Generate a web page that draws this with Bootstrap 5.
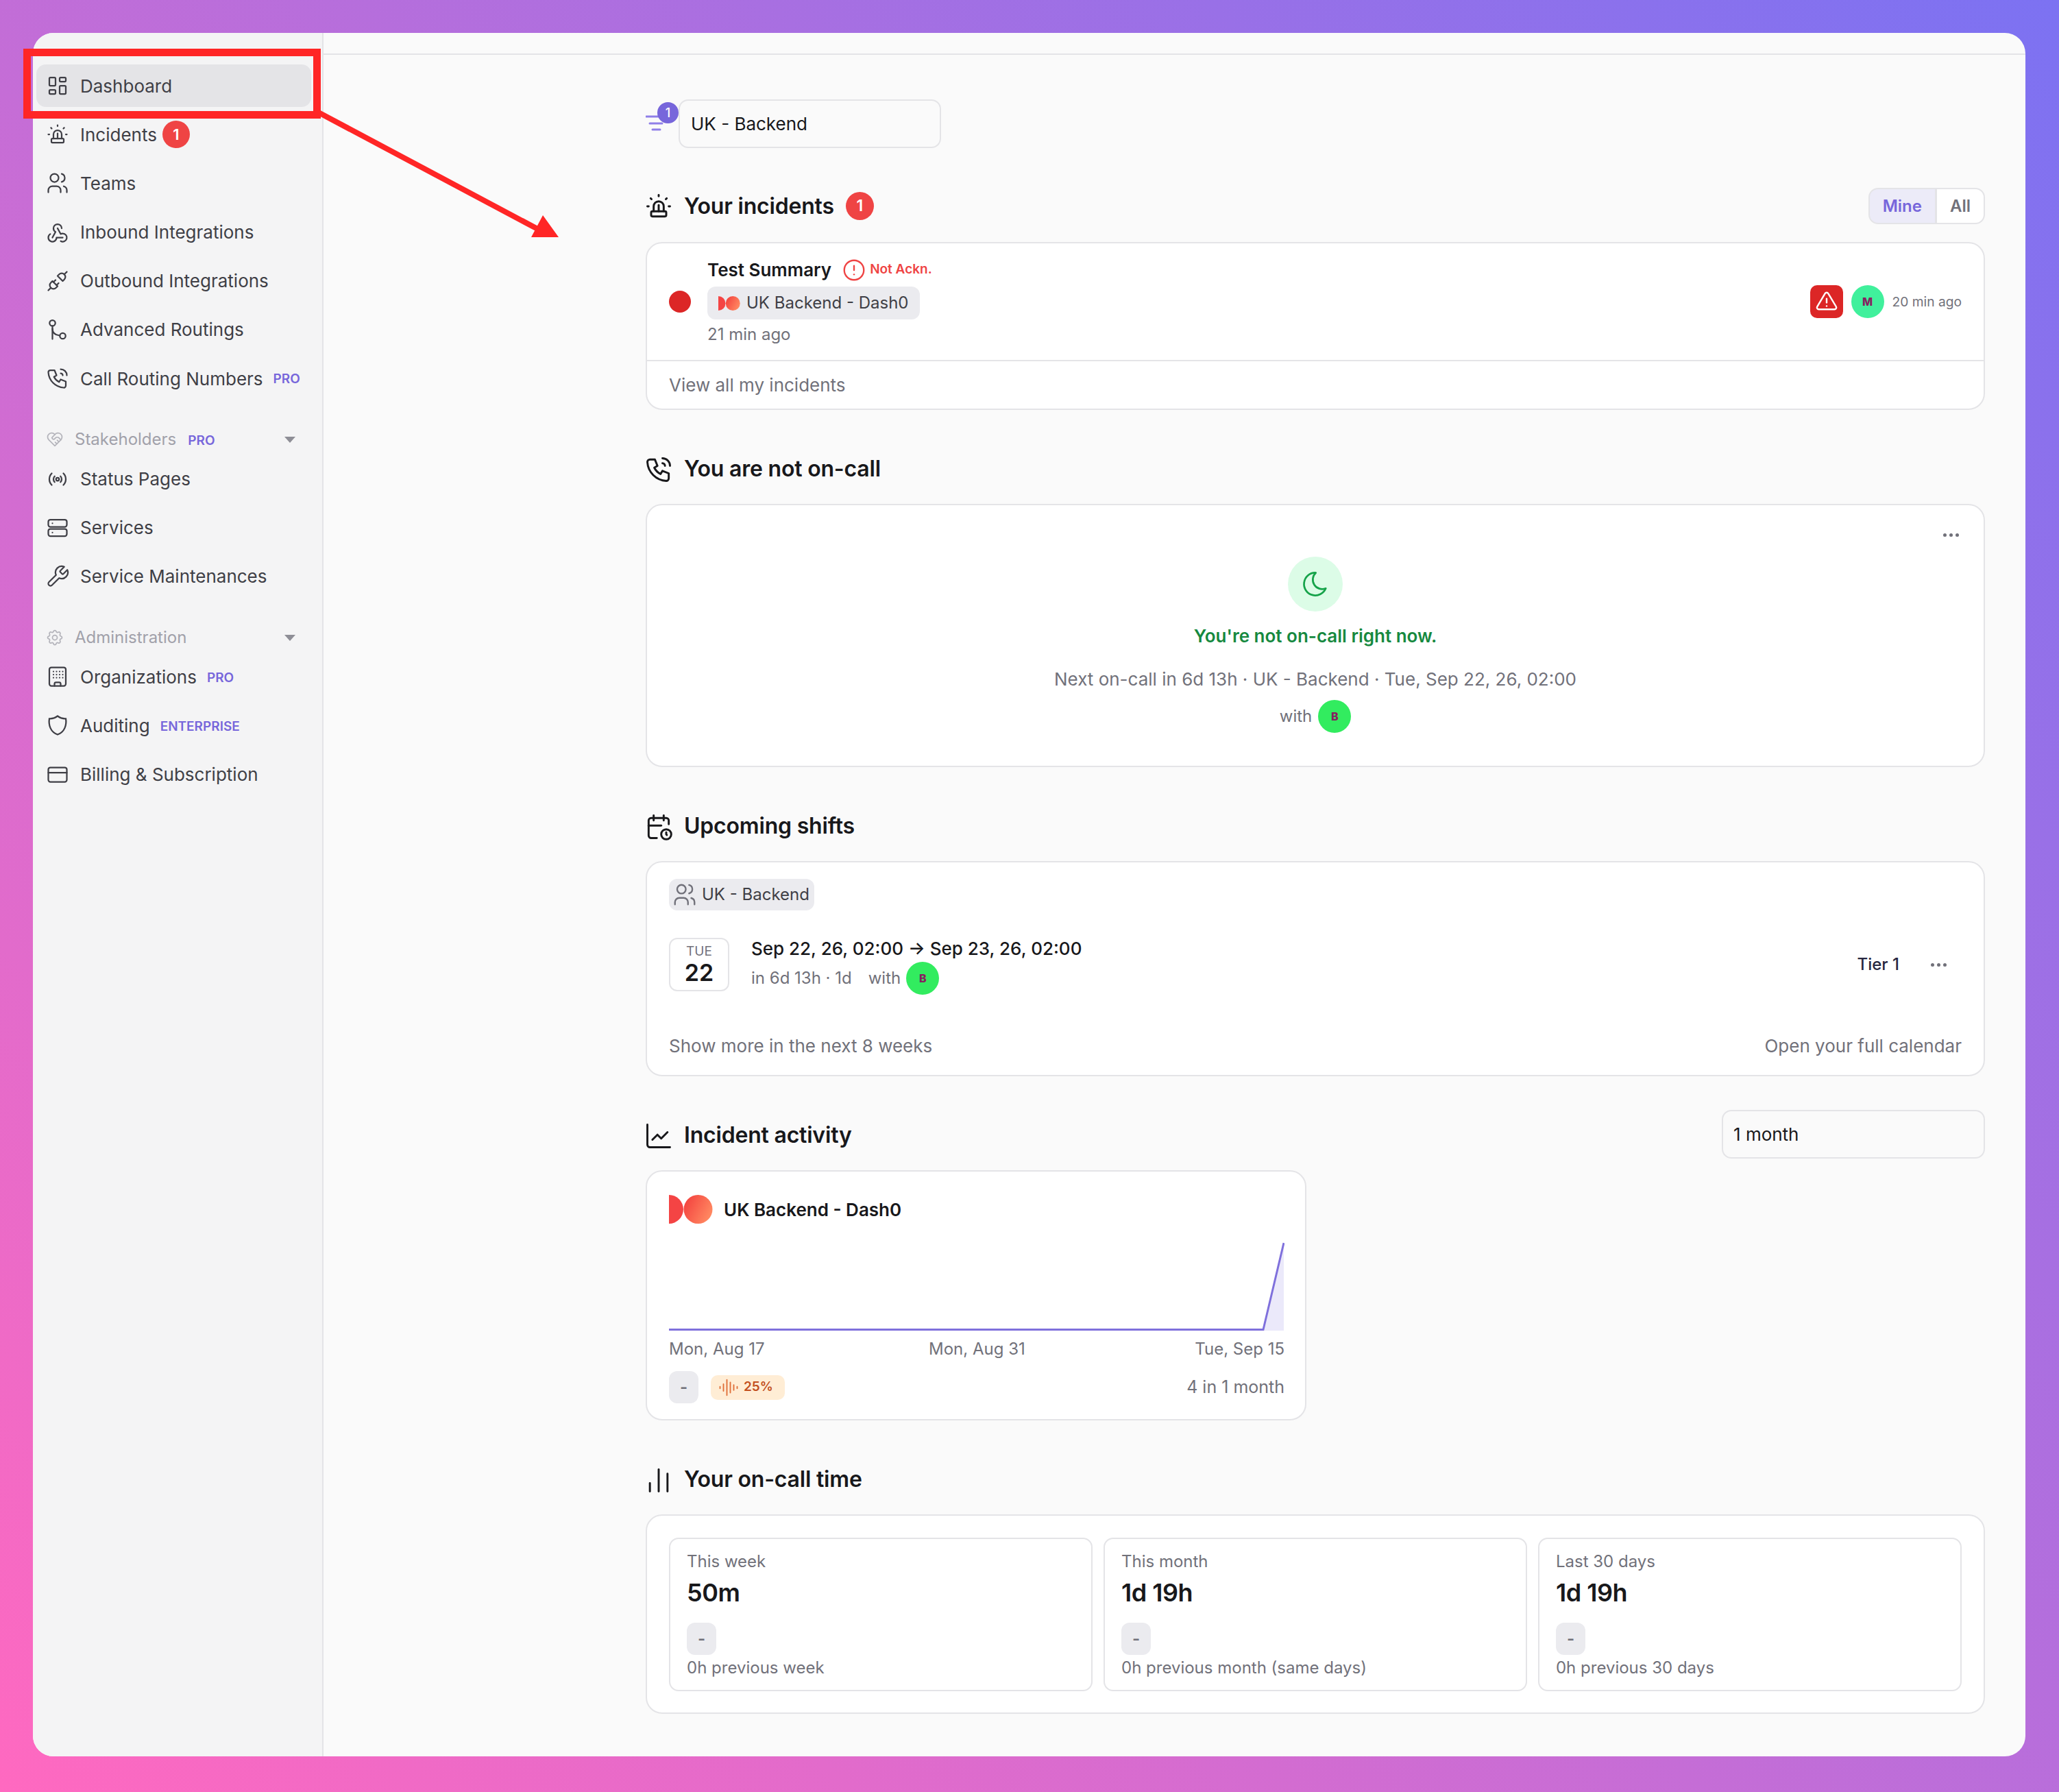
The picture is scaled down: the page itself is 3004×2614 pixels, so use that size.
<!DOCTYPE html>
<html lang="en">
<head>
    <meta charset="UTF-8">
    <title>Dashboard</title>
    <link href="https://cdn.jsdelivr.net/npm/bootstrap@5.3.0/dist/css/bootstrap.min.css" rel="stylesheet">
    <style>
        html, body { height: 100%; }
        body {
            font-family: Inter, "Liberation Sans", sans-serif;
            font-size: 26px;
            color: #18181b;
            background: linear-gradient(45deg, #ff69c0, #7c72f2);
            padding: 48px 49px 52px 48px;
            position: relative;
        }
        svg.ico { fill: none; stroke: currentColor; stroke-width: 1.5; stroke-linecap: round; stroke-linejoin: round; flex: none; }
        .app-window { height: 100%; border-radius: 30px; overflow: hidden; background: #fafafa; }

        /* sidebar */
        .sidebar { width: 424px; flex: none; background: #f4f4f5; border-right: 2px solid #e4e4e7; padding: 46px 16px 0 5px; gap: 9.2px; }
        .sidebar .nav-link { height: 62px; padding: 0 0 0 13px; border-radius: 14px; color: #3f3f46; gap: 15px; font-size: 26px; white-space: nowrap; }
        .sidebar .nav-link.active { background: #e4e4e7; }
        .sidebar .nav-link svg.ico { width: 36px; height: 36px; }
        .sidebar .count { width: 40px; height: 40px; background: #ef4444; color: #fff; border-radius: 50%; font-size: 22px; font-weight: 600; margin-left: -7px; }
        .plan { color: #7766db; font-size: 19px; font-weight: 600; margin-left: 0; padding-top: 3px; }
        .group-label { height: 50px; margin: 24px 0 -8px; padding: 0 23px 0 13px; color: #a1a1aa; font-size: 24px; gap: 15px; }
        .group-label svg.ico { width: 28px; height: 28px; color: #b4b4bb; }
        .group-label .plan { margin-left: 2px; }
        .caret-down { width: 0; height: 0; margin-left: auto; border-left: 8px solid transparent; border-right: 8px solid transparent; border-top: 9px solid #8e8e96; }

        /* main column */
        .main-col { min-width: 0; }
        .top-line { height: 32px; flex: none; border-bottom: 2px solid #e4e4e7; }
        .content { padding: 65px 59px 0 470px; }
        .filter-row { height: 71px; }
        .filter-icon { width: 48px; height: 71px; position: relative; color: #8f7fe8; flex: none; }
        .filter-icon svg { position: absolute; left: 0; top: 16px; stroke-width: 3; }
        .filter-icon b { position: absolute; right: 0; top: 4px; width: 31px; height: 31px; border-radius: 50%; background: #7766db; color: #fff; font-size: 18px; font-weight: 500; }
        .plain-select { background: #fafafa; border: 2px solid #e4e4e7; border-radius: 14px; font-size: 26px; color: #18181b; display: flex; align-items: center; height: 71px; }
        .select-team { width: 383px; padding: 0 16px; }
        .select-range { width: 384px; padding: 0 15px; margin-bottom: 4px; }

        .section-head { height: 53px; margin: 60px 0 24px; gap: 17px; }
        .section-head.first { margin-top: 58px; margin-bottom: 26px; }
        .section-head.first h2 { margin-top: 2px; }
        .section-head h2 { font-size: 32px; font-weight: 600; margin: 0; letter-spacing: -0.2px; }
        .section-head svg.ico { width: 44px; height: 44px; stroke-width: 1.6; margin: 0 -2px 0 -3px; }
        .section-head .count { width: 41px; height: 41px; background: #ef4444; color: #fff; border-radius: 50%; font-size: 23px; font-weight: 600; }

        .btn-group .btn { font-size: 24px; font-weight: 600; padding: 0 19px; height: 53px; border: 2px solid #e4e4e7; background: #fff; color: #71717a; display: flex; align-items: center; }
        .btn-group .btn.active { background: #ecebf8; color: #7766db; border-color: #e4e4e7; }
        .btn-group .btn:first-child { border-radius: 14px 0 0 14px; }
        .btn-group .btn:last-child { border-radius: 0 14px 14px 0; }

        .card { --bs-card-border-color: #e4e4e7; --bs-card-border-width: 2px; --bs-card-border-radius: 24px; --bs-card-inner-border-radius: 22px; --bs-card-bg: #fff; }
        .muted { color: #71717a; font-size: 24px; }
        .pill { background: #ebebef; border-radius: 12px; color: #3f3f46; }

        /* incident card */
        .incident-row { height: 172px; padding: 0 32px; border-bottom: 2px solid #e4e4e7; }
        .sev-dot { width: 32px; height: 32px; background: #dc2626; border-radius: 50%; flex: none; }
        .incident-title { font-weight: 600; font-size: 26px; }
        .not-ack { color: #ef4444; font-size: 19px; font-weight: 600; gap: 4px; margin-left: -2px; }
        .not-ack svg.ico { width: 38px; height: 38px; }
        .source-pill { height: 48px; padding: 0 17px 0 16px; gap: 9px; margin: 5px 0 4px; font-size: 24px; }
        .sev-box { width: 48px; height: 48px; background: #dc2626; color: #fff; border-radius: 10px; }
        .sev-box svg.ico { width: 34px; height: 34px; stroke-width: 1.7; }
        .avatar { width: 48px; height: 48px; border-radius: 50%; color: #86205f; font-size: 16px; font-weight: 800; flex: none; }
        .avatar-m { background: #40f09c; }
        .avatar-b { background: #32ec5f; }
        .ago { font-size: 19.2px; color: #71717a; }
        .card-link-row { height: 69px; padding: 0 32px; color: #71717a; font-size: 26px; }

        /* on-call card */
        .oncall-card { height: 384px; }
        .more-dots { color: #71717a; gap: 4px; }
        .more-dots i { width: 5px; height: 5px; border-radius: 50%; background: currentColor; display: block; }
        .oncall-card .more-dots { position: absolute; top: 41px; right: 36px; }
        .moon-circle { width: 80px; height: 80px; border-radius: 50%; background: #dcfce7; color: #16a34a; margin-top: 75px; }
        .moon-circle svg.ico { width: 44px; height: 44px; }
        .off-text { color: #16893f; font-weight: 600; margin-top: 16px; }
        .next-text { color: #71717a; margin-top: 24px; }
        .with-row { margin-top: 11px; gap: 9px; color: #71717a; font-size: 24px; }

        /* shifts */
        .shift-card { height: 314px; padding: 24px 32px 0; }
        .team-pill { height: 46px; padding: 0 7px 0 4px; gap: 6px; font-size: 24px; }
        .team-pill svg.ico { width: 38px; height: 38px; color: #71717a; }
        .date-box { width: 88px; height: 78px; border: 2px solid #e4e4e7; border-radius: 12px; line-height: 1; flex: none; }
        .date-box small { font-size: 19px; color: #71717a; margin-bottom: 5px; }
        .date-box strong { font-size: 34px; font-weight: 600; }
        .shift-row { margin-top: 40px; gap: 32px; }
        .shift-time { font-weight: 500; line-height: 31px; }
        .shift-meta { margin-top: 4px; }
        .shift-side { margin-bottom: 5px; padding-right: 22px; }
        .tier { font-weight: 500; font-size: 24px; color: #27273f; margin-right: 46px; }
        .shift-foot { margin-top: 55px; color: #71717a; }

        /* activity */
        .activity-card { width: 964px; height: 365px; padding: 34px 30px 0 32px; }
        .activity-title { font-weight: 600; gap: 16px; }
        .chart { margin-top: 27px; }
        .axis-row { margin-top: 9px; }
        .activity-foot { margin-top: 14px; }
        .month-count { font-size: 25px; }
        .dash-pill { width: 43px; height: 47px; color: #71717a; font-size: 24px; font-weight: 600; }
        .noise-badge { height: 36px; margin-left: 2px; padding: 0 17px 0 11px; background: #ffedd5; color: #c2501e; border-radius: 10px; font-size: 19px; font-weight: 600; gap: 7px; }
        .noise-badge svg.ico { width: 30px; height: 30px; color: #e0703a; }

        /* on-call time */
        .time-card { padding: 32px; height: 291px; }
        .stat-card { height: 224px; padding: 17px 24px 0; --bs-card-border-radius: 14px; --bs-card-inner-border-radius: 12px; }
        .stat-card .label { color: #71717a; font-size: 24px; line-height: 32px; }
        .stat-card .value { font-size: 36px; font-weight: 600; line-height: 48px; margin: 5px 0 20px; letter-spacing: -0.5px; }
        .stat-card .prev { color: #71717a; font-size: 24px; line-height: 32px; margin-top: 3px; }

        /* screenshot annotation, lies over the page */
        .note-box { position: absolute; left: 34px; top: 71px; width: 434px; height: 102px; border: 11px solid #ff2626; pointer-events: none; }
        .note-arrow { position: absolute; left: 0; top: 0; pointer-events: none; }
    </style>
</head>
<body>
    <svg width="0" height="0" class="position-absolute">
        <defs>
            <symbol id="i-dashboard" viewBox="0 0 24 24"><path d="M5 4h4a1 1 0 0 1 1 1v6a1 1 0 0 1 -1 1h-4a1 1 0 0 1 -1 -1v-6a1 1 0 0 1 1 -1"/><path d="M5 16h4a1 1 0 0 1 1 1v2a1 1 0 0 1 -1 1h-4a1 1 0 0 1 -1 -1v-2a1 1 0 0 1 1 -1"/><path d="M15 12h4a1 1 0 0 1 1 1v6a1 1 0 0 1 -1 1h-4a1 1 0 0 1 -1 -1v-6a1 1 0 0 1 1 -1"/><path d="M15 4h4a1 1 0 0 1 1 1v2a1 1 0 0 1 -1 1h-4a1 1 0 0 1 -1 -1v-2a1 1 0 0 1 1 -1"/></symbol>
            <symbol id="i-siren" viewBox="0 0 24 24"><path d="M8 16v-4a4 4 0 0 1 8 0v4"/><path d="M12 11v5"/><path d="M3 12h1m8 -9v1m8 8h1m-15.4 -6.4l.7 .7m12.1 -.7l-.7 .7"/><path d="M6 17a1 1 0 0 1 1 -1h10a1 1 0 0 1 1 1v2a1 1 0 0 1 -1 1h-10a1 1 0 0 1 -1 -1z"/></symbol>
            <symbol id="i-users" viewBox="0 0 24 24"><path d="M5 7a4 4 0 1 0 8 0a4 4 0 1 0 -8 0"/><path d="M3 21v-2a4 4 0 0 1 4 -4h4a4 4 0 0 1 4 4v2"/><path d="M16 3.13a4 4 0 0 1 0 7.75"/><path d="M21 21v-2a4 4 0 0 0 -3 -3.85"/></symbol>
            <symbol id="i-webhook" viewBox="0 0 24 24"><path d="M4.876 13.61a4 4 0 1 0 6.124 3.39h6"/><path d="M15.066 20.502a4 4 0 1 0 1.934 -7.502c-.706 0 -1.424 .179 -2 .5l-3 -5.5"/><path d="M16 8a4 4 0 1 0 -8 0c0 1.506 .77 2.818 2 3.5l-3 5.5"/></symbol>
            <symbol id="i-plug" viewBox="0 0 24 24"><path d="M7 12l5 5l-1.5 1.5a3.536 3.536 0 1 1 -5 -5l1.5 -1.5z"/><path d="M17 12l-5 -5l1.5 -1.5a3.536 3.536 0 1 1 5 5l-1.5 1.5z"/><path d="M3 21l2.5 -2.5"/><path d="M18.5 5.5l2.5 -2.5"/><path d="M10 11l-2 2"/><path d="M13 14l-2 2"/></symbol>
            <symbol id="i-route" viewBox="0 0 24 24"><circle cx="7" cy="5.5" r="2.8"/><path d="M7 8.3v12.7"/><path d="M7 11c0 4 2.5 6 6.5 6.5"/><circle cx="17" cy="18" r="2.8"/></symbol>
            <symbol id="i-phone" viewBox="0 0 24 24"><path d="M5 4h4l2 5l-2.5 1.5a11 11 0 0 0 5 5l1.5 -2.5l5 2v4a2 2 0 0 1 -2 2a16 16 0 0 1 -15 -15a2 2 0 0 1 2 -2"/><path d="M15 7a2 2 0 0 1 2 2"/><path d="M15 3a6 6 0 0 1 6 6"/></symbol>
            <symbol id="i-handshake" viewBox="0 0 24 24"><path d="M19.5 12.572l-7.5 7.428l-7.5 -7.428a5 5 0 1 1 7.5 -6.566a5 5 0 1 1 7.5 6.572"/><path d="M12 6l-3.293 3.293a1 1 0 0 0 0 1.414l.543 .543c.69 .69 1.81 .69 2.5 0l1 -1a3.182 3.182 0 0 1 4.5 0l2.25 2.25"/><path d="M12.5 15.5l2 2"/><path d="M15 13l2 2"/></symbol>
            <symbol id="i-broadcast" viewBox="0 0 24 24"><circle cx="12" cy="12" r="1.5"/><path d="M14.828 9.172a4 4 0 0 1 0 5.656"/><path d="M17.657 6.343a8 8 0 0 1 0 11.314"/><path d="M9.168 14.828a4 4 0 0 1 0 -5.656"/><path d="M6.337 17.657a8 8 0 0 1 0 -11.314"/></symbol>
            <symbol id="i-server" viewBox="0 0 24 24"><path d="M3 6a2 2 0 0 1 2 -2h14a2 2 0 0 1 2 2v3a2 2 0 0 1 -2 2h-14a2 2 0 0 1 -2 -2z"/><path d="M3 15a2 2 0 0 1 2 -2h14a2 2 0 0 1 2 2v3a2 2 0 0 1 -2 2h-14a2 2 0 0 1 -2 -2z"/><path d="M7 7.5v.01"/><path d="M7 16.5v.01"/></symbol>
            <symbol id="i-wrench" viewBox="0 0 24 24"><path d="M14.7 6.3a1 1 0 0 0 0 1.4l1.6 1.6a1 1 0 0 0 1.4 0l3.77-3.77a6 6 0 0 1-7.94 7.94l-6.91 6.91a2.12 2.12 0 0 1-3-3l6.91-6.91a6 6 0 0 1 7.94-7.94l-3.76 3.76z"/></symbol>
            <symbol id="i-gear" viewBox="0 0 24 24"><path d="M10.325 4.317c.426 -1.756 2.924 -1.756 3.35 0a1.724 1.724 0 0 0 2.573 1.066c1.543 -.94 3.31 .826 2.37 2.37a1.724 1.724 0 0 0 1.065 2.572c1.756 .426 1.756 2.924 0 3.35a1.724 1.724 0 0 0 -1.066 2.573c.94 1.543 -.826 3.31 -2.37 2.37a1.724 1.724 0 0 0 -2.572 1.065c-.426 1.756 -2.924 1.756 -3.35 0a1.724 1.724 0 0 0 -2.573 -1.066c-1.543 .94 -3.31 -.826 -2.37 -2.37a1.724 1.724 0 0 0 -1.065 -2.572c-1.756 -.426 -1.756 -2.924 0 -3.35a1.724 1.724 0 0 0 1.066 -2.573c-.94 -1.543 .826 -3.31 2.37 -2.37c1 .608 2.296 .07 2.572 -1.065z"/><path d="M9 12a3 3 0 1 0 6 0a3 3 0 0 0 -6 0"/></symbol>
            <symbol id="i-building" viewBox="0 0 24 24"><rect x="4" y="3" width="16" height="18" rx="2"/><path d="M9 21v-2a1.5 1.5 0 0 1 1.5 -1.5h3a1.5 1.5 0 0 1 1.5 1.5v2"/><path d="M8 7v.01M11 7v.01M14 7v.01M17 7v.01M8 10v.01M11 10v.01M14 10v.01M17 10v.01M8 13v.01M11 13v.01M14 13v.01M17 13v.01"/></symbol>
            <symbol id="i-shield" viewBox="0 0 24 24"><path d="M12 3a12 12 0 0 0 8 2.5c1 6 -1 13 -8 15.5c-7 -2.5 -9 -9.5 -8 -15.5a12 12 0 0 0 8 -2.5"/></symbol>
            <symbol id="i-card" viewBox="0 0 24 24"><rect x="3" y="5" width="18" height="14" rx="2"/><path d="M3 10h18"/></symbol>
            <symbol id="i-calendar-clock" viewBox="0 0 24 24"><path d="M10.5 21h-4.5a2 2 0 0 1 -2 -2v-12a2 2 0 0 1 2 -2h12a2 2 0 0 1 2 2v3"/><path d="M16 3v4"/><path d="M8 3v4"/><path d="M4 11h10"/><path d="M14 18a4 4 0 1 0 8 0a4 4 0 1 0 -8 0"/><path d="M18 16.5v1.5l.5 .5"/></symbol>
            <symbol id="i-chart" viewBox="0 0 24 24"><path d="M3 3v16a2 2 0 0 0 2 2h16"/><path d="M7 15l4 -4l3 3l5 -5"/></symbol>
            <symbol id="i-bars" viewBox="0 0 24 24"><path d="M5 21v-6.5"/><path d="M12 21v-17.5"/><path d="M19 21v-14"/></symbol>
            <symbol id="i-moon" viewBox="0 0 24 24"><path d="M12 3c.132 0 .263 0 .393 0a7.5 7.5 0 0 0 7.92 12.446a9 9 0 1 1 -8.313 -12.454z"/></symbol>
            <symbol id="i-alert" viewBox="0 0 24 24"><circle cx="12" cy="12" r="9"/><path d="M12 8v4"/><path d="M12 16h.01"/></symbol>
            <symbol id="i-warning" viewBox="0 0 24 24"><path d="M12 9v4"/><path d="M10.363 3.591l-8.106 13.534a1.914 1.914 0 0 0 1.636 2.871h16.214a1.914 1.914 0 0 0 1.636 -2.87l-8.106 -13.536a1.914 1.914 0 0 0 -3.274 0z"/><path d="M12 16.5h.01"/></symbol>
            <symbol id="i-wave" viewBox="0 0 24 24"><path d="M2 11v2M6 8v8M10 3v18M14 6v12M18 9v6M22 11v2"/></symbol>
            <linearGradient id="dash-grad" x1="0" x2="1" y1="0" y2="0.5"><stop offset="0" stop-color="#f23b3b"/><stop offset="1" stop-color="#ff8660"/></linearGradient>
            <symbol id="i-dash0" viewBox="0 0 64 42"><path d="M0 0a21 21 0 0 1 0 42z" fill="#f44444"/><circle cx="42.5" cy="21" r="21" fill="url(#dash-grad)"/></symbol>
        </defs>
    </svg>

    <div class="app-window d-flex">
        <aside class="sidebar d-flex flex-column">
            <a class="nav-link active d-flex align-items-center" href="#"><svg class="ico"><use href="#i-dashboard"/></svg>Dashboard</a>
            <a class="nav-link d-flex align-items-center" href="#"><svg class="ico"><use href="#i-siren"/></svg>Incidents<span class="count d-flex align-items-center justify-content-center">1</span></a>
            <a class="nav-link d-flex align-items-center" href="#"><svg class="ico"><use href="#i-users"/></svg>Teams</a>
            <a class="nav-link d-flex align-items-center" href="#"><svg class="ico"><use href="#i-webhook"/></svg>Inbound Integrations</a>
            <a class="nav-link d-flex align-items-center" href="#"><svg class="ico"><use href="#i-plug"/></svg>Outbound Integrations</a>
            <a class="nav-link d-flex align-items-center" href="#"><svg class="ico"><use href="#i-route"/></svg>Advanced Routings</a>
            <a class="nav-link d-flex align-items-center" href="#"><svg class="ico"><use href="#i-phone"/></svg>Call Routing Numbers<span class="plan">PRO</span></a>

            <div class="group-label d-flex align-items-center"><svg class="ico"><use href="#i-handshake"/></svg>Stakeholders<span class="plan">PRO</span><span class="caret-down"></span></div>
            <a class="nav-link d-flex align-items-center" href="#"><svg class="ico"><use href="#i-broadcast"/></svg>Status Pages</a>
            <a class="nav-link d-flex align-items-center" href="#"><svg class="ico"><use href="#i-server"/></svg>Services</a>
            <a class="nav-link d-flex align-items-center" href="#"><svg class="ico"><use href="#i-wrench"/></svg>Service Maintenances</a>

            <div class="group-label d-flex align-items-center"><svg class="ico"><use href="#i-gear"/></svg>Administration<span class="caret-down"></span></div>
            <a class="nav-link d-flex align-items-center" href="#"><svg class="ico"><use href="#i-building"/></svg>Organizations<span class="plan">PRO</span></a>
            <a class="nav-link d-flex align-items-center" href="#"><svg class="ico"><use href="#i-shield"/></svg>Auditing<span class="plan">ENTERPRISE</span></a>
            <a class="nav-link d-flex align-items-center" href="#"><svg class="ico"><use href="#i-card"/></svg>Billing &amp; Subscription</a>
        </aside>

        <div class="main-col flex-grow-1 d-flex flex-column">
            <div class="top-line"></div>
            <main class="content">
                <div class="filter-row d-flex align-items-center">
                    <div class="filter-icon">
                        <svg class="ico" width="26" height="32" viewBox="0 0 26 32"><path d="M1 9h24M6 19h18M10 28h11"/></svg>
                        <b class="d-flex align-items-center justify-content-center">1</b>
                    </div>
                    <div class="plain-select select-team">UK - Backend</div>
                </div>

                <section>
                    <div class="section-head first d-flex align-items-center">
                        <svg class="ico"><use href="#i-siren"/></svg>
                        <h2>Your incidents</h2>
                        <span class="count d-flex align-items-center justify-content-center">1</span>
                        <div class="btn-group ms-auto">
                            <button class="btn active" type="button">Mine</button>
                            <button class="btn" type="button">All</button>
                        </div>
                    </div>
                    <div class="card">
                        <div class="incident-row d-flex align-items-center">
                            <span class="sev-dot me-4"></span>
                            <div class="d-flex flex-column align-items-start">
                                <div class="d-flex align-items-center gap-3">
                                    <span class="incident-title">Test Summary</span>
                                    <span class="not-ack d-flex align-items-center"><svg class="ico"><use href="#i-alert"/></svg>Not Ackn.</span>
                                </div>
                                <div class="pill source-pill d-flex align-items-center">
                                    <svg width="32" height="21"><use href="#i-dash0"/></svg>UK Backend - Dash0
                                </div>
                                <span class="muted">21 min ago</span>
                            </div>
                            <div class="ms-auto d-flex align-items-center gap-2">
                                <span class="sev-box d-flex align-items-center justify-content-center"><svg class="ico"><use href="#i-warning"/></svg></span>
                                <span class="avatar avatar-m d-flex align-items-center justify-content-center mx-1">M</span>
                                <span class="ago">20 min ago</span>
                            </div>
                        </div>
                        <div class="card-link-row d-flex align-items-center">View all my incidents</div>
                    </div>
                </section>

                <section>
                    <div class="section-head d-flex align-items-center">
                        <svg class="ico"><use href="#i-phone"/></svg>
                        <h2>You are not on-call</h2>
                    </div>
                    <div class="card oncall-card align-items-center text-center">
                        <div class="more-dots d-flex"><i></i><i></i><i></i></div>
                        <div class="moon-circle d-flex align-items-center justify-content-center"><svg class="ico"><use href="#i-moon"/></svg></div>
                        <div class="off-text">You're not on-call right now.</div>
                        <div class="next-text">Next on-call in 6d 13h · UK - Backend · Tue, Sep 22, 26, 02:00</div>
                        <div class="with-row d-flex align-items-center">with <span class="avatar avatar-b d-flex align-items-center justify-content-center">B</span></div>
                    </div>
                </section>

                <section>
                    <div class="section-head d-flex align-items-center">
                        <svg class="ico"><use href="#i-calendar-clock"/></svg>
                        <h2>Upcoming shifts</h2>
                    </div>
                    <div class="card shift-card">
                        <div class="d-flex">
                            <div class="pill team-pill d-flex align-items-center"><svg class="ico"><use href="#i-users"/></svg>UK - Backend</div>
                        </div>
                        <div class="shift-row d-flex align-items-start">
                            <div class="date-box d-flex flex-column align-items-center justify-content-center">
                                <small>TUE</small>
                                <strong>22</strong>
                            </div>
                            <div>
                                <div class="shift-time">Sep 22, 26, 02:00 → Sep 23, 26, 02:00</div>
                                <div class="muted shift-meta d-flex align-items-center">in 6d 13h · 1d<span class="ms-4 me-2">with</span><span class="avatar avatar-b d-flex align-items-center justify-content-center">B</span></div>
                            </div>
                            <div class="shift-side ms-auto align-self-center d-flex align-items-center">
                                <span class="tier">Tier 1</span>
                                <div class="more-dots d-flex"><i></i><i></i><i></i></div>
                            </div>
                        </div>
                        <div class="shift-foot d-flex justify-content-between">
                            <span>Show more in the next 8 weeks</span>
                            <span>Open your full calendar</span>
                        </div>
                    </div>
                </section>

                <section>
                    <div class="section-head d-flex align-items-center">
                        <svg class="ico"><use href="#i-chart"/></svg>
                        <h2>Incident activity</h2>
                        <div class="plain-select select-range ms-auto">1 month</div>
                    </div>
                    <div class="card activity-card">
                        <div class="activity-title d-flex align-items-center"><svg width="64" height="42"><use href="#i-dash0"/></svg>UK Backend - Dash0</div>
                        <svg class="chart d-block" width="898" height="129" viewBox="0 0 898 129">
                            <polygon points="867,127 897,0 897,129 867,129" fill="#ebe9fa"/>
                            <polyline points="0,127.5 867,127.5 897,1" fill="none" stroke="#7f70dc" stroke-width="3"/>
                        </svg>
                        <div class="axis-row muted d-flex justify-content-between"><span>Mon, Aug 17</span><span class="me-2">Mon, Aug 31</span><span>Tue, Sep 15</span></div>
                        <div class="activity-foot d-flex align-items-center gap-3">
                            <span class="pill dash-pill d-flex align-items-center justify-content-center">-</span>
                            <span class="noise-badge d-flex align-items-center"><svg class="ico"><use href="#i-wave"/></svg>25%</span>
                            <span class="muted month-count ms-auto">4 in 1 month</span>
                        </div>
                    </div>
                </section>

                <section>
                    <div class="section-head d-flex align-items-center">
                        <svg class="ico"><use href="#i-bars"/></svg>
                        <h2>Your on-call time</h2>
                    </div>
                    <div class="card time-card">
                        <div class="row g-3">
                            <div class="col-4">
                                <div class="card stat-card">
                                    <div class="label">This week</div>
                                    <div class="value">50m</div>
                                    <span class="pill dash-pill d-flex align-items-center justify-content-center">-</span>
                                    <div class="prev">0h previous week</div>
                                </div>
                            </div>
                            <div class="col-4">
                                <div class="card stat-card">
                                    <div class="label">This month</div>
                                    <div class="value">1d 19h</div>
                                    <span class="pill dash-pill d-flex align-items-center justify-content-center">-</span>
                                    <div class="prev">0h previous month (same days)</div>
                                </div>
                            </div>
                            <div class="col-4">
                                <div class="card stat-card">
                                    <div class="label">Last 30 days</div>
                                    <div class="value">1d 19h</div>
                                    <span class="pill dash-pill d-flex align-items-center justify-content-center">-</span>
                                    <div class="prev">0h previous 30 days</div>
                                </div>
                            </div>
                        </div>
                    </div>
                </section>
            </main>
        </div>
    </div>

    <!-- red annotation over the screenshot -->
    <div class="note-box"></div>
    <svg class="note-arrow" width="3004" height="2614">
        <line x1="459" y1="161" x2="790" y2="337" stroke="#ff2626" stroke-width="8"/>
        <polygon points="792,314 815,346 775,346" fill="#ff2626"/>
    </svg>

    <script src="https://cdn.jsdelivr.net/npm/bootstrap@5.3.0/dist/js/bootstrap.bundle.min.js"></script>
</body>
</html>
